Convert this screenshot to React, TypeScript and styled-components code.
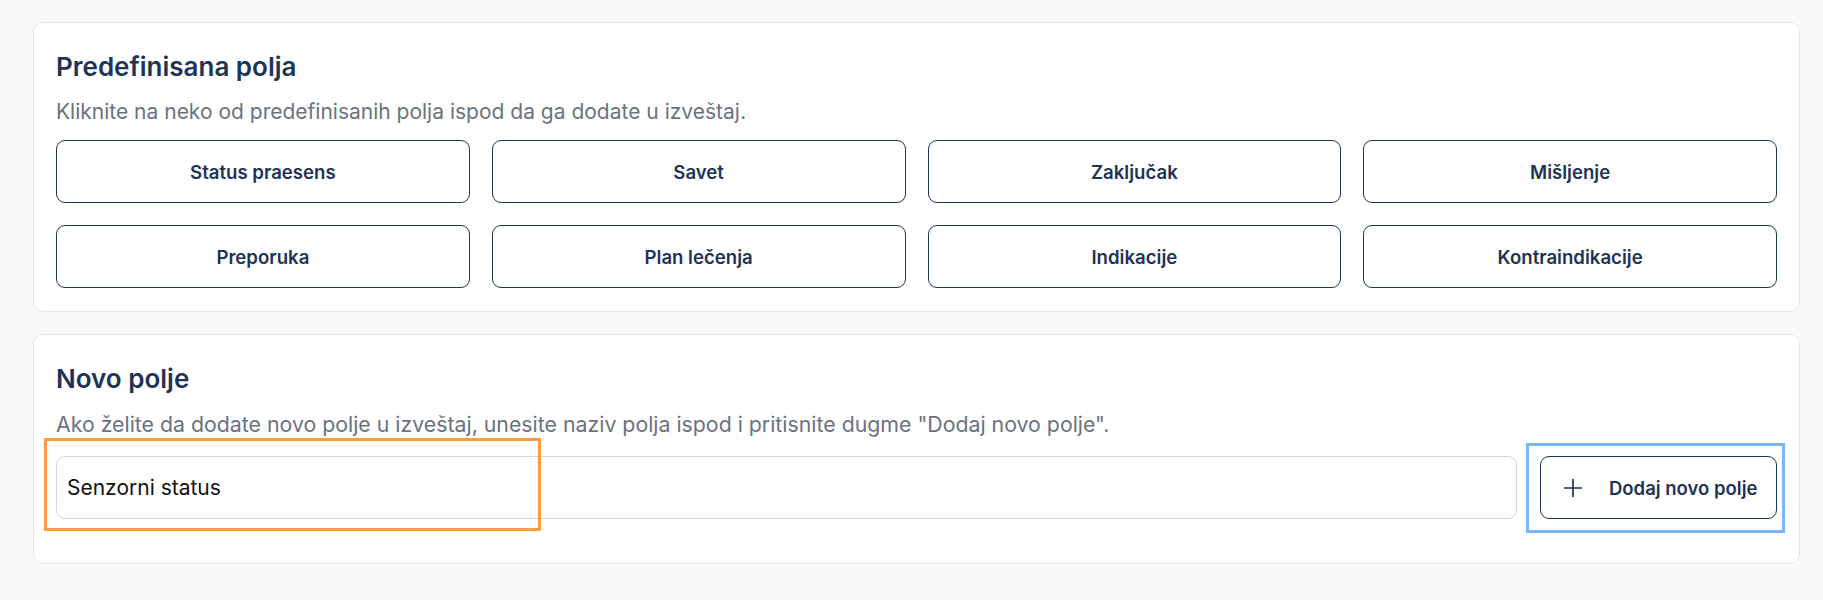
import React from 'react';
import styled, { createGlobalStyle } from 'styled-components';

const GlobalStyle = createGlobalStyle`
  html, body {
    margin: 0;
    padding: 0;
    background: #f8f9fb;
    font-family: Inter, "Noto Sans", "Liberation Sans", sans-serif;
  }
`;

const Page = styled.div`
  display: flex;
  flex-direction: column;
  gap: 22px;
  padding: 22px 23px 22px 33px;
`;

const Card = styled.section`
  background: #fff;
  border: 1px solid #e5e7eb;
  border-radius: 10px;
  padding: 27px 22px 23px;
`;

const Title = styled.h2`
  margin: 0;
  font-size: 26px;
  line-height: 34px;
  font-weight: 600;
  color: #1e3355;
`;

const Hint = styled.p<{ $size?: number }>`
  margin: 14px 0 0;
  font-size: ${(p) => p.$size ?? 21}px;
  line-height: 28px;
  color: #6b7280;
`;

const FieldGrid = styled.div`
  display: grid;
  grid-template-columns: repeat(4, 1fr);
  gap: 22px;
  margin-top: 14px;
`;

const FieldButton = styled.button`
  height: 63px;
  background: #fff;
  border: 1px solid #1e3355;
  border-radius: 9px;
  font-family: inherit;
  font-size: 18.6px;
  font-weight: 600;
  color: #1e3355;
  cursor: pointer;
`;

const AddRow = styled.div`
  display: flex;
  gap: 23px;
  margin-top: 18px;
  padding-bottom: 21px;
`;

const InputWrap = styled.div`
  position: relative;
  flex: 1;
  display: flex;
`;

const NameInput = styled.input`
  flex: 1;
  height: 63px;
  box-sizing: border-box;
  border: 1px solid #d4d6dc;
  border-radius: 9px;
  padding: 0 10px;
  font-family: inherit;
  font-size: 21px;
  color: #111;
  outline: none;
`;

// annotation frames drawn over the input and the button
const OrangeMark = styled.div`
  position: absolute;
  left: -12px;
  top: -18px;
  width: 497px;
  height: 93px;
  box-sizing: border-box;
  border: 3px solid #fa9c40;
  pointer-events: none;
`;

const ButtonWrap = styled.div`
  position: relative;
  display: flex;
`;

const BlueMark = styled.div`
  position: absolute;
  left: -14px;
  right: -8px;
  top: -13px;
  bottom: -14px;
  border: 3px solid #7cb5f8;
  pointer-events: none;
`;

const AddButton = styled.button`
  display: flex;
  align-items: center;
  gap: 26px;
  width: 237px;
  height: 63px;
  padding: 0 0 0 22px;
  background: #fff;
  border: 1px solid #1e3355;
  border-radius: 9px;
  font-family: inherit;
  font-size: 18.5px;
  font-weight: 600;
  color: #1e3355;
  white-space: nowrap;
  cursor: pointer;
`;

const PlusIcon = () => (
  <svg width="20" height="20" viewBox="0 0 20 20" fill="none" stroke="#1e3355" strokeWidth="1.7">
    <path d="M10 1v18M1 10h18" />
  </svg>
);

const fields = [
  'Status praesens',
  'Savet',
  'Zaključak',
  'Mišljenje',
  'Preporuka',
  'Plan lečenja',
  'Indikacije',
  'Kontraindikacije',
];

const App: React.FC = () => {
  return (
    <React.Fragment>
      <GlobalStyle />
      <Page>
        <Card>
          <Title>Predefinisana polja</Title>
          <Hint>Kliknite na neko od predefinisanih polja ispod da ga dodate u izveštaj.</Hint>
          <FieldGrid>
            {fields.map((f) => (
              <FieldButton key={f}>{f}</FieldButton>
            ))}
          </FieldGrid>
        </Card>

        <Card>
          <Title>Novo polje</Title>
          <Hint $size={21.3}>
            Ako želite da dodate novo polje u izveštaj, unesite naziv polja ispod i pritisnite dugme "Dodaj novo polje".
          </Hint>
          <AddRow>
            <InputWrap>
              <NameInput defaultValue="Senzorni status" />
              <OrangeMark />
            </InputWrap>
            <ButtonWrap>
              <AddButton>
                <PlusIcon />
                Dodaj novo polje
              </AddButton>
              <BlueMark />
            </ButtonWrap>
          </AddRow>
        </Card>
      </Page>
    </React.Fragment>
  );
};

export default App;
